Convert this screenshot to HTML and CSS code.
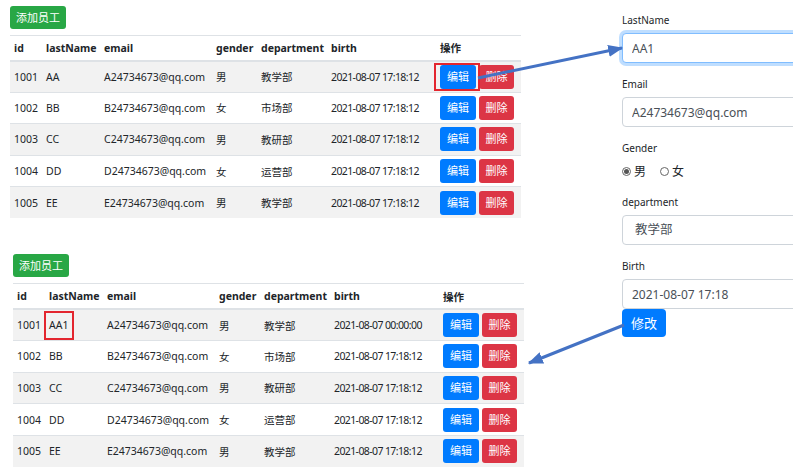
FILE: index.html
```html
<!DOCTYPE html>
<html lang="zh-CN">
<head>
    <meta charset="UTF-8">
    <meta name="viewport" content="width=device-width, initial-scale=1.0">
    <title>员工列表 - 修改</title>
    <link rel="stylesheet" href="styles.css">
</head>
<body>
    <div class="page">
        <div class="lists">
            <div class="panel panel-before">
                <button class="btn btn-add">添加员工</button>
                <table class="emp-table">
                    <thead>
                        <tr>
                            <th class="c-id">id</th>
                            <th class="c-name">lastName</th>
                            <th class="c-email">email</th>
                            <th class="c-gender">gender</th>
                            <th class="c-dept">department</th>
                            <th class="c-birth">birth</th>
                            <th class="c-ops">操作</th>
                        </tr>
                    </thead>
                    <tbody>
                        <tr>
                            <td>1001</td><td>AA</td><td>A24734673@qq.com</td><td>男</td><td>教学部</td>
                            <td class="date">2021-08-07 17:18:12</td>
                            <td><button class="btn btn-edit marked">编辑</button><button class="btn btn-del">删除</button></td>
                        </tr>
                        <tr>
                            <td>1002</td><td>BB</td><td>B24734673@qq.com</td><td>女</td><td>市场部</td>
                            <td class="date">2021-08-07 17:18:12</td>
                            <td><button class="btn btn-edit">编辑</button><button class="btn btn-del">删除</button></td>
                        </tr>
                        <tr>
                            <td>1003</td><td>CC</td><td>C24734673@qq.com</td><td>男</td><td>教研部</td>
                            <td class="date">2021-08-07 17:18:12</td>
                            <td><button class="btn btn-edit">编辑</button><button class="btn btn-del">删除</button></td>
                        </tr>
                        <tr>
                            <td>1004</td><td>DD</td><td>D24734673@qq.com</td><td>女</td><td>运营部</td>
                            <td class="date">2021-08-07 17:18:12</td>
                            <td><button class="btn btn-edit">编辑</button><button class="btn btn-del">删除</button></td>
                        </tr>
                        <tr>
                            <td>1005</td><td>EE</td><td>E24734673@qq.com</td><td>男</td><td>教学部</td>
                            <td class="date">2021-08-07 17:18:12</td>
                            <td><button class="btn btn-edit">编辑</button><button class="btn btn-del">删除</button></td>
                        </tr>
                    </tbody>
                </table>
            </div>

            <div class="panel panel-after">
                <button class="btn btn-add">添加员工</button>
                <table class="emp-table">
                    <thead>
                        <tr>
                            <th class="c-id">id</th>
                            <th class="c-name">lastName</th>
                            <th class="c-email">email</th>
                            <th class="c-gender">gender</th>
                            <th class="c-dept">department</th>
                            <th class="c-birth">birth</th>
                            <th class="c-ops">操作</th>
                        </tr>
                    </thead>
                    <tbody>
                        <tr>
                            <td>1001</td><td><span class="marked">AA1</span></td><td>A24734673@qq.com</td><td>男</td><td>教学部</td>
                            <td class="date">2021-08-07 00:00:00</td>
                            <td><button class="btn btn-edit">编辑</button><button class="btn btn-del">删除</button></td>
                        </tr>
                        <tr>
                            <td>1002</td><td>BB</td><td>B24734673@qq.com</td><td>女</td><td>市场部</td>
                            <td class="date">2021-08-07 17:18:12</td>
                            <td><button class="btn btn-edit">编辑</button><button class="btn btn-del">删除</button></td>
                        </tr>
                        <tr>
                            <td>1003</td><td>CC</td><td>C24734673@qq.com</td><td>男</td><td>教研部</td>
                            <td class="date">2021-08-07 17:18:12</td>
                            <td><button class="btn btn-edit">编辑</button><button class="btn btn-del">删除</button></td>
                        </tr>
                        <tr>
                            <td>1004</td><td>DD</td><td>D24734673@qq.com</td><td>女</td><td>运营部</td>
                            <td class="date">2021-08-07 17:18:12</td>
                            <td><button class="btn btn-edit">编辑</button><button class="btn btn-del">删除</button></td>
                        </tr>
                        <tr>
                            <td>1005</td><td>EE</td><td>E24734673@qq.com</td><td>男</td><td>教学部</td>
                            <td class="date">2021-08-07 17:18:12</td>
                            <td><button class="btn btn-edit">编辑</button><button class="btn btn-del">删除</button></td>
                        </tr>
                    </tbody>
                </table>
            </div>
        </div>

        <form class="edit-form">
            <div class="form-group">
                <label class="form-label">LastName</label>
                <input type="text" class="form-control focused" value="AA1">
            </div>
            <div class="form-group">
                <label class="form-label">Email</label>
                <input type="text" class="form-control" value="A24734673@qq.com">
            </div>
            <div class="form-group">
                <label class="form-label">Gender</label>
                <div class="radio-row">
                    <span class="radio checked"></span><span class="radio-text">男</span>
                    <span class="radio"></span><span class="radio-text">女</span>
                </div>
            </div>
            <div class="form-group">
                <label class="form-label">department</label>
                <div class="form-control form-select">教学部</div>
            </div>
            <div class="form-group last">
                <label class="form-label">Birth</label>
                <input type="text" class="form-control" value="2021-08-07 17:18">
            </div>
            <button type="button" class="btn btn-submit">修改</button>
        </form>
    </div>

    <!-- annotation arrows -->
    <svg class="arrows" width="793" height="470" viewBox="0 0 793 470">
        <defs>
            <marker id="head" markerWidth="5" markerHeight="4" refX="4.6" refY="2" orient="auto" markerUnits="strokeWidth">
                <path d="M0,0 L5,2 L0,4 Z" fill="#4472c4"></path>
            </marker>
        </defs>
        <line x1="478" y1="78" x2="622" y2="48" stroke="#4472c4" stroke-width="3" marker-end="url(#head)"></line>
        <line x1="624" y1="325" x2="529" y2="363" stroke="#4472c4" stroke-width="3" marker-end="url(#head)"></line>
    </svg>
</body>
</html>
```

FILE: styles.css
```css
* {
    box-sizing: border-box;
    margin: 0;
    padding: 0;
}

body {
    font-family: "Noto Sans", "Noto Sans CJK SC", sans-serif;
    font-size: 10.5px;
    color: #212529;
    background-color: #fff;
    width: 793px;
    height: 470px;
    overflow: hidden;
    position: relative;
}

.page {
    display: flex;
}

.lists {
    width: 622px;
    flex: none;
}

.panel-before {
    padding: 6px 0 0 10px;
}

.panel-after {
    padding: 36px 0 0 13px;
}

/* buttons */
.btn {
    display: inline-block;
    border: none;
    border-radius: 3px;
    color: #fff;
    font-family: inherit;
    font-size: 11px;
    line-height: 24px;
    height: 24px;
    padding: 0 7px;
    cursor: pointer;
}

.btn-add {
    background-color: #28a745;
    height: 23px;
    line-height: 23px;
    width: 56px;
    padding: 0;
}

.btn-edit { background-color: #007bff; width: 36px; padding: 0; }
.btn-del { background-color: #dc3545; width: 35px; padding: 0; margin-left: 3px; }

/* table */
.emp-table {
    margin-top: 6px;
    width: 511px;
    table-layout: fixed;
    border-collapse: collapse;
}

.emp-table th,
.emp-table td {
    padding: 0 4px;
    text-align: left;
    vertical-align: middle;
    white-space: nowrap;
    border-top: 1px solid #dee2e6;
}

.emp-table th {
    font-weight: bold;
    height: 25px;
    border-bottom: 2px solid #dee2e6;
}

.emp-table td {
    height: 31.6px;
}

.emp-table td.date {
    letter-spacing: -0.6px;
}

.emp-table tbody tr:nth-child(odd) {
    background-color: #f2f2f2;
}

.c-id { width: 32px; }
.c-name { width: 58px; }
.c-email { width: 112px; }
.c-gender { width: 45px; }
.c-dept { width: 70px; }
.c-birth { width: 109px; }
.c-ops { width: 85px; }

/* red annotation boxes */
.marked {
    position: relative;
    display: inline-block;
}

.marked::after {
    content: "";
    position: absolute;
    top: -2px;
    bottom: -2px;
    left: -6px;
    right: -4px;
    border: 2px solid #e3262f;
}

span.marked::after {
    top: -7px;
    bottom: -8px;
    left: -5px;
    right: -6px;
}

/* edit form */
.edit-form {
    padding-top: 10px;
    width: 200px;
    flex: none;
}

.form-group {
    margin-bottom: 11px;
}

.form-group.last {
    margin-bottom: 0;
}

.form-label {
    display: block;
    font-size: 10px;
    line-height: 20px;
    margin-bottom: 3px;
}

.form-control {
    display: block;
    width: 200px;
    height: 30px;
    padding: 0 9px;
    border: 1px solid #ced4da;
    border-radius: 4px;
    font-family: inherit;
    font-size: 12px;
    color: #495057;
    background: #fff;
}

.form-control.focused {
    border-color: #80bdff;
    box-shadow: 0 0 0 3px rgba(0, 123, 255, 0.25);
    outline: none;
}

.form-select {
    line-height: 28px;
    padding-left: 12px;
    font-size: 12.5px;
}

.radio-row {
    display: flex;
    align-items: center;
    height: 20px;
    margin-bottom: 2px;
    font-size: 12px;
}

.radio {
    width: 9px;
    height: 9px;
    border: 1px solid #666;
    border-radius: 50%;
    position: relative;
    margin-right: 3px;
}

.radio.checked::after {
    content: "";
    position: absolute;
    top: 1px;
    left: 1px;
    width: 5px;
    height: 5px;
    border-radius: 50%;
    background-color: #555;
}

.radio-text {
    margin-right: 14px;
}

.btn-submit {
    background-color: #007bff;
    width: 44px;
    height: 28px;
    line-height: 28px;
    padding: 0;
    font-size: 13px;
    border-radius: 4px;
}

.arrows {
    position: absolute;
    top: 0;
    left: 0;
    pointer-events: none;
}
```
